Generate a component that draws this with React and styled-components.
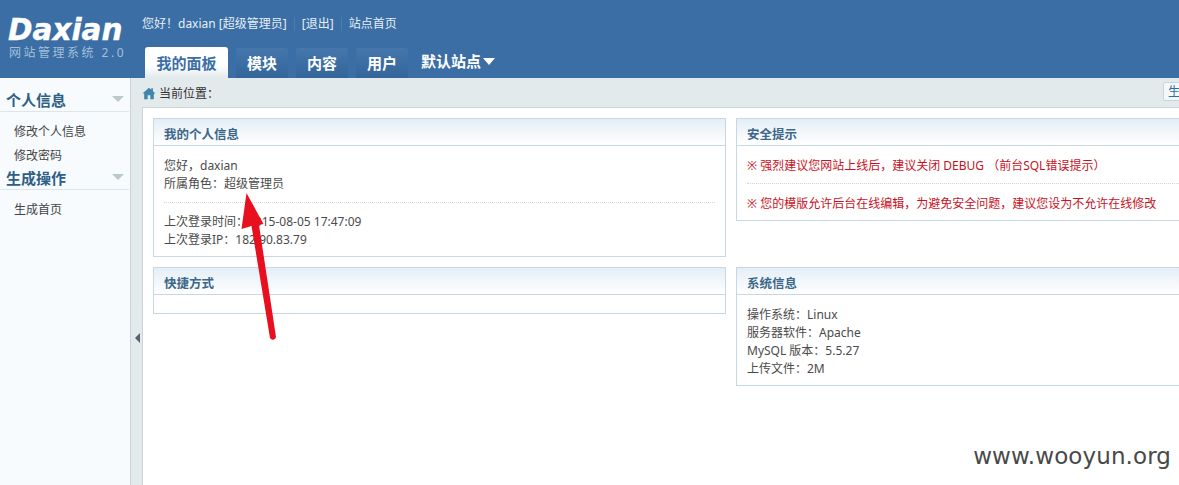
import React from 'react';
import styled, { createGlobalStyle } from 'styled-components';

const GlobalStyle = createGlobalStyle`
	html, body {
		margin: 0;
		padding: 0;
		background: #fff;
		overflow: hidden;
	}
	body {
		font-family: "Noto Sans", "Noto Sans CJK SC", sans-serif;
		font-size: 12px;
		color: #444;
	}
`

const Page = styled.div`
	position: relative;
	width: 1179px;
	height: 485px;
	overflow: hidden;
	display: flex;
	flex-direction: column;
`

const Header = styled.header`
	height: 78px;
	flex: none;
	background: #3a6ea5;
	display: flex;
`

const Logo = styled.div`
	width: 142px;
	flex: none;
	padding: 15px 0 0 8px;
	box-sizing: border-box;
`

const LogoName = styled.div`
	font-family: "DejaVu Sans", sans-serif;
	font-weight: 700;
	font-style: italic;
	font-size: 29.5px;
	line-height: 30px;
	color: #fff;
	-webkit-text-stroke: 0.4px #fff;
	white-space: nowrap;
`

const LogoSub = styled.div`
	font-size: 12px;
	line-height: 16px;
	color: #a3bfdc;
	letter-spacing: 2.5px;
	padding-left: 1px;
	white-space: nowrap;
`

const HeaderMain = styled.div`
	display: flex;
	flex-direction: column;
	justify-content: space-between;
	padding-top: 16px;
`

const TopLinks = styled.div`
	display: flex;
	align-items: center;
	height: 16px;
	color: #e6eef6;
	font-size: 12px;
	white-space: nowrap;
`

const TopLink = styled.span`
	padding: 0 7px;
	line-height: 14px;
	border-left: ${props => (props.$sep ? '1px solid #4f7fb1' : '0')};
	&:first-child {
		padding-left: 0;
	}
`

const Tabs = styled.nav`
	display: flex;
	align-items: flex-end;
	gap: 8px;
	padding-left: 3px;
`

const Tab = styled.div`
	width: ${props => (props.$active ? '83px' : '52px')};
	height: ${props => (props.$active ? '31px' : '30px')};
	box-sizing: border-box;
	border-radius: 3px 3px 0 0;
	display: flex;
	align-items: center;
	justify-content: center;
	padding-bottom: 1px;
	font-family: "Noto Sans CJK SC", sans-serif;
	font-weight: 700;
	font-size: 15px;
	color: ${props => (props.$active ? '#3a6ea5' : '#fff')};
	background: ${props => (props.$active
		? 'linear-gradient(#fff 0%, #fff 60%, #e3eaec 100%)'
		: 'linear-gradient(#4577ad, #33659b)')};
`

const SiteMenu = styled.div`
	display: flex;
	align-items: center;
	gap: 2px;
	height: 30px;
	margin-left: 5px;
	padding-bottom: 5px;
	box-sizing: border-box;
	font-family: "Noto Sans CJK SC", sans-serif;
	font-weight: 700;
	font-size: 15px;
	color: #fff;
	white-space: nowrap;
`

const Caret = styled.span`
	width: 0;
	height: 0;
	margin-top: 2px;
	border-left: 6.5px solid transparent;
	border-right: 6.5px solid transparent;
	border-top: 7px solid #fff;
`

const Body = styled.div`
	flex: 1;
	display: flex;
	min-height: 0;
`

const Sidebar = styled.aside`
	width: 131px;
	flex: none;
	box-sizing: border-box;
	background: #f7fbfd;
	border-right: 1px solid #c9d3d8;
	padding: 9px 0 0 0;
`

const SideHead = styled.div`
	display: flex;
	align-items: center;
	justify-content: space-between;
	height: 24px;
	margin-right: 1px;
	padding: 0 5px 0 6px;
	border-bottom: 1px solid #dde6ea;
	font-family: "Noto Sans CJK SC", sans-serif;
	font-weight: 700;
	font-size: 15px;
	color: #2f5f86;
`

const SideCaret = styled.span`
	width: 0;
	height: 0;
	border-left: 6px solid transparent;
	border-right: 6px solid transparent;
	border-top: 6px solid #bcc8ce;
`

const SideList = styled.ul`
	list-style: none;
	margin: 0;
	padding: 8px 0 0 14px;
`

const SideItem = styled.li`
	height: 24px;
	line-height: 24px;
	font-size: 12px;
	color: #444;
	&:last-child {
		height: 21px;
	}
`

const Strip = styled.div`
	width: 12px;
	flex: none;
	box-sizing: border-box;
	background: #e3eaec;
	border-right: 1px solid #c9d3d8;
	display: flex;
	align-items: center;
	justify-content: center;
	padding-top: 113px;
`

const StripArrow = styled.span`
	width: 0;
	height: 0;
	margin-left: 2px;
	border-top: 5px solid transparent;
	border-bottom: 5px solid transparent;
	border-right: 5px solid #55626b;
`

const Main = styled.main`
	flex: 1;
	min-width: 0;
	display: flex;
	flex-direction: column;
`

const Crumbs = styled.div`
	height: 30px;
	flex: none;
	box-sizing: border-box;
	background: #e3eaec;
	border-bottom: 1px solid #c9d6da;
	margin-left: -1px;
	padding-bottom: 1px;
	display: flex;
	align-items: center;
	justify-content: space-between;
	color: #333;
`

const CrumbText = styled.div`
	display: flex;
	align-items: center;
	gap: 3px;
	padding-top: 2px;
`

const CrumbButton = styled.div`
	width: 40px;
	height: 19px;
	margin-right: -24px;
	margin-bottom: 1px;
	box-sizing: border-box;
	border: 1px solid #c9d6da;
	border-radius: 2px;
	background: #f4f8f9;
	color: #2f6f9a;
	font-size: 12px;
	line-height: 17px;
	padding-left: 4px;
`

const Grid = styled.div`
	display: grid;
	grid-template-columns: 573px 560px;
	column-gap: 10px;
	row-gap: 10px;
	align-items: start;
	padding: 10px 0 0 10px;
`

const Panel = styled.section`
	box-sizing: border-box;
	border: 1px solid #c8d8e2;
`

const PanelHead = styled.h3`
	margin: 0;
	height: 27px;
	box-sizing: border-box;
	padding-left: 10px;
	line-height: 30px;
	background: linear-gradient(#e4eef7, #fff);
	border-bottom: 1px solid #c8d8e2;
	font-family: "Noto Sans CJK SC", sans-serif;
	font-size: 12.5px;
	font-weight: 700;
	color: #3d6788;
`

const PanelBody = styled.div`
	padding: ${props => props.$pad || '11px 10px 7px'};
	min-height: ${props => props.$minHeight || '0'};
	box-sizing: border-box;
`

const Line = styled.div`
	line-height: 18px;
	white-space: nowrap;
	color: #4a4a4a;
`

const Dotted = styled.div`
	border-top: 1px dotted #ccd5d9;
	margin: ${props => props.$margin};
`

const Warn = styled.div`
	line-height: 18px;
	color: #c8121e;
	white-space: nowrap;
`

const Arrow = styled.svg`
	position: absolute;
	left: 235px;
	top: 188px;
`

const Watermark = styled.div`
	position: absolute;
	right: 8px;
	top: 441px;
	font-family: "DejaVu Sans", sans-serif;
	font-size: 23px;
	line-height: 30px;
	color: #484848;
	letter-spacing: 0.1px;
`

function App() {
	return (
		<Page>
			<GlobalStyle />
			<Header>
				<Logo>
					<LogoName>Daxian</LogoName>
					<LogoSub>网站管理系统 2.0</LogoSub>
				</Logo>
				<HeaderMain>
					<TopLinks>
						<TopLink>您好！daxian [超级管理员]</TopLink>
						<TopLink $sep>[退出]</TopLink>
						<TopLink $sep>站点首页</TopLink>
					</TopLinks>
					<Tabs>
						<Tab $active>我的面板</Tab>
						<Tab>模块</Tab>
						<Tab>内容</Tab>
						<Tab>用户</Tab>
						<SiteMenu>默认站点<Caret /></SiteMenu>
					</Tabs>
				</HeaderMain>
			</Header>
			<Body>
				<Sidebar>
					<SideHead>个人信息<SideCaret /></SideHead>
					<SideList>
						<SideItem>修改个人信息</SideItem>
						<SideItem>修改密码</SideItem>
					</SideList>
					<SideHead>生成操作<SideCaret /></SideHead>
					<SideList>
						<SideItem>生成首页</SideItem>
					</SideList>
				</Sidebar>
				<Strip><StripArrow /></Strip>
				<Main>
					<Crumbs>
						<CrumbText>
							<svg width="14" height="13" viewBox="0 0 16 14">
								<path d="M8 0.5 L10.5 2.7 L10.5 1 L12.5 1 L12.5 4.5 L15.5 7 L13.5 7 L13.5 13.5 L9.5 13.5 L9.5 9 L6.5 9 L6.5 13.5 L2.5 13.5 L2.5 7 L0.5 7 Z" fill="#3f86ad" />
							</svg>
							当前位置：
						</CrumbText>
						<CrumbButton>生</CrumbButton>
					</Crumbs>
					<Grid>
						<Panel>
							<PanelHead>我的个人信息</PanelHead>
							<PanelBody>
								<Line>您好，daxian</Line>
								<Line>所属角色：超级管理员</Line>
								<Dotted $margin="9px 0 10px" />
								<Line>上次登录时间：2015-08-05 17:47:09</Line>
								<Line>上次登录IP：182.90.83.79</Line>
							</PanelBody>
						</Panel>
						<Panel>
							<PanelHead>安全提示</PanelHead>
							<PanelBody>
								<Warn>※ 强烈建议您网站上线后，建议关闭 DEBUG （前台SQL错误提示）</Warn>
								<Dotted $margin="8px 0 11px" />
								<Warn>※ 您的模版允许后台在线编辑，为避免安全问题，建议您设为不允许在线修改</Warn>
							</PanelBody>
						</Panel>
						<Panel>
							<PanelHead>快捷方式</PanelHead>
							<PanelBody $minHeight="18px" $pad="0" />
						</Panel>
						<Panel>
							<PanelHead>系统信息</PanelHead>
							<PanelBody>
								<Line>操作系统：Linux</Line>
								<Line>服务器软件：Apache</Line>
								<Line>MySQL 版本：5.5.27</Line>
								<Line>上传文件：2M</Line>
							</PanelBody>
						</Panel>
					</Grid>
				</Main>
			</Body>
			<Arrow width="50" height="160" viewBox="0 0 50 160">
				<path d="M11.5 5 L6.5 41 L16.5 38 L35 150 A3.2 3.2 0 0 0 41 149 L24 37 L28.5 36 Z" fill="#e8101e" />
			</Arrow>
			<Watermark>www.wooyun.org</Watermark>
		</Page>
	)
}

export default App;
